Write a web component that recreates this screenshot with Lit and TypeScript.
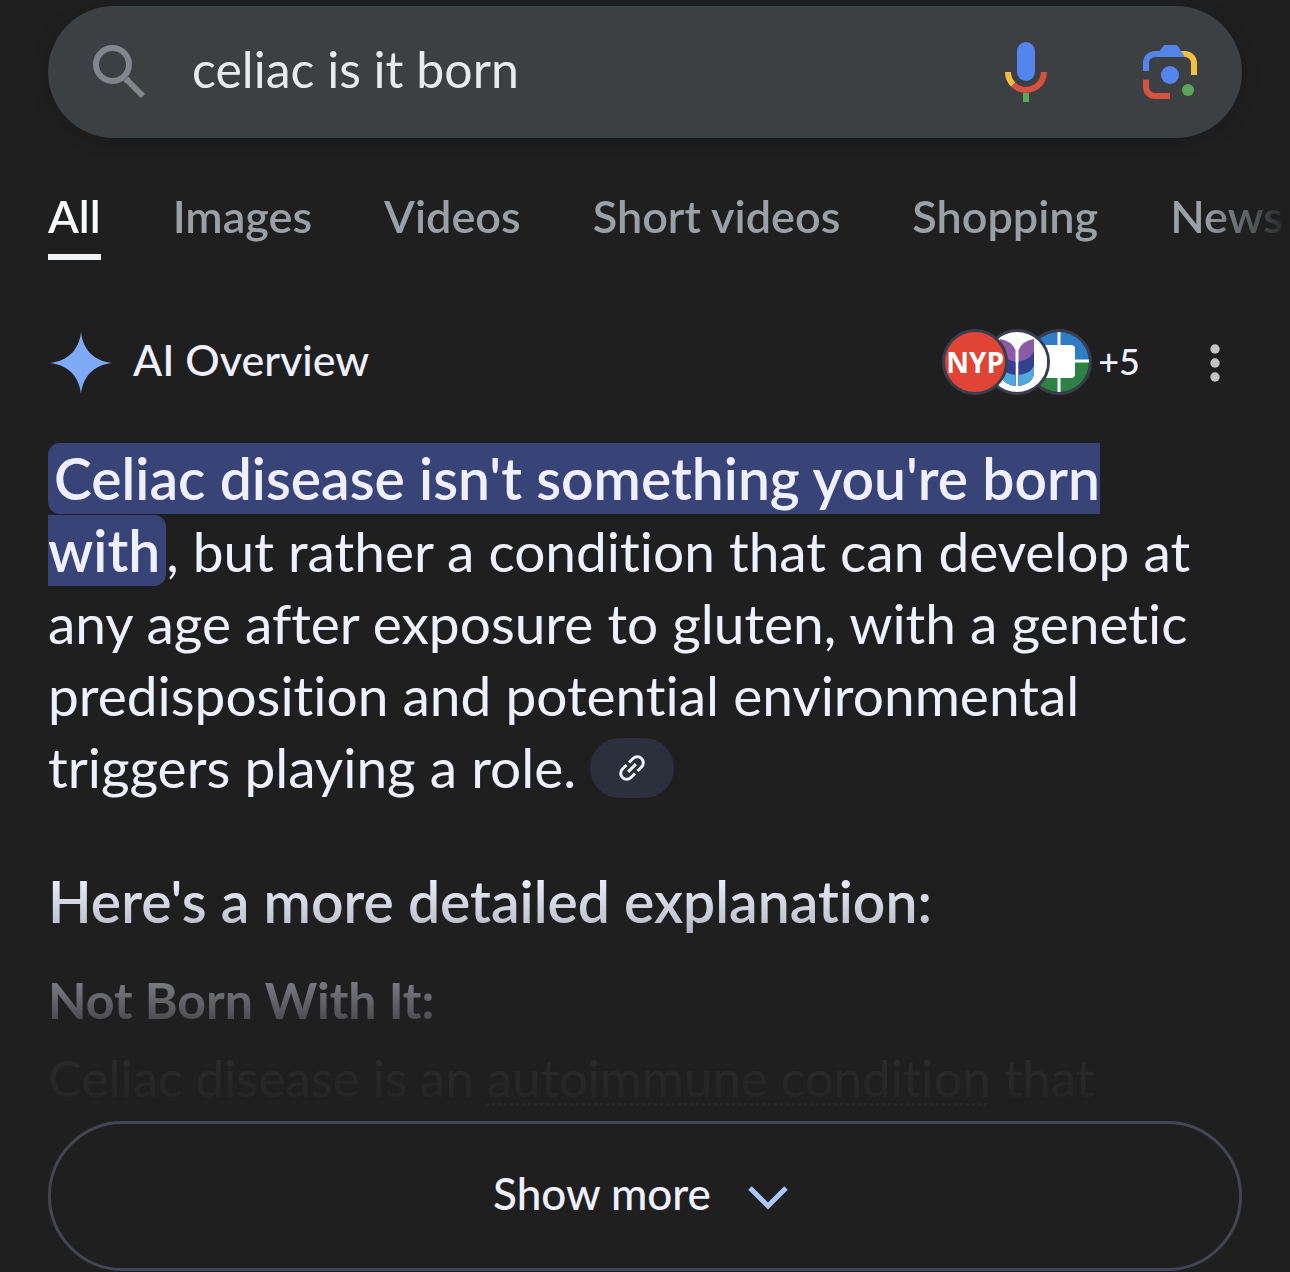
import { LitElement, html, svg, css } from "lit";
import { customElement, property, state } from "lit/decorators.js";

const searchIcon = svg`<svg class="glass" viewBox="0 0 54 54" width="54" height="54" fill="none" stroke="#80868b" stroke-width="6" aria-hidden="true">
  <circle cx="20.5" cy="19.5" r="16.5"/><path d="M34 34 51 51" stroke-width="6"/><path d="M33.500 36.500 36.500 33.500" stroke-width="3" stroke-linecap="round"/></svg>`;

const micIcon = svg`<svg viewBox="0 0 42 60" width="42" height="60" fill="none" stroke-width="6" aria-hidden="true">
  <rect x="12" y="0" width="18" height="39" rx="9" fill="#5385ec"/>
  <path d="M3 30a18 18 0 0 0 5.3 12.7" stroke="#f1bf42"/>
  <path d="M8.3 42.7A18 18 0 0 0 39 30" stroke="#d85140"/>
  <path d="M21 51v9" stroke="#58a55c"/></svg>`;

const lensIcon = svg`<svg viewBox="0 0 54 54" width="54" height="54" fill="none" stroke-width="6" aria-hidden="true">
  <path d="M38 9h4a9 9 0 0 1 9 9v12" stroke="#f1bf42"/>
  <path d="M3 26v-8a9 9 0 0 1 9-9h20" stroke="#5385ec"/>
  <path d="M16 7 20.500 .8Q21 0 22 0h11q1 0 1.500 .8L42 12H16z" fill="#5385ec"/>
  <path d="M3 34.500V42a9 9 0 0 0 9 9h15" stroke="#d85140"/>
  <circle cx="27" cy="30" r="9" fill="#5385ec"/><circle cx="45" cy="45" r="6" fill="#58a55c"/></svg>`;

const sparkIcon = svg`<svg viewBox="0 0 66 66" width="66" height="66" aria-hidden="true">
  <path d="M33 2C35 20 46 31 64 33 46 35 35 46 33 64 31 46 20 35 2 33 20 31 31 20 33 2z" fill="#7faaf8"/></svg>`;

const leafHalf = svg`<path d="M47 7Q35 9 31.500 18V54Q47 51 47 40z" fill="#8d5ba6"/>
  <path d="M47 19Q44 27 31.500 30V54Q47 51 47 40z" fill="#33418f"/>
  <path d="M47 34Q43 42 31.500 43V54Q47 51 47 40z" fill="#4fa9dc"/>`;

const leafIcon = svg`<svg viewBox="0 0 60 60" width="60" height="60" aria-hidden="true">
  <rect width="60" height="60" fill="#fff"/>
  <g>${leafHalf}</g>
  <g transform="matrix(-1 0 0 1 60 0)">
    <path d="M47 7Q35 9 31.500 18V54Q47 51 47 40z" fill="#8d5ba6"/>
    <path d="M47 19Q44 27 31.500 30V54Q47 51 47 40z" fill="#33418f"/>
    <path d="M47 34Q43 42 31.500 43V54Q47 51 47 40z" fill="#4fa9dc"/>
  </g></svg>`;

const crossIcon = svg`<svg viewBox="0 0 60 60" width="60" height="60" aria-hidden="true">
  <rect width="60" height="29" fill="#2f7dc4"/><rect y="29" width="60" height="31" fill="#2d8144"/>
  <path d="M30 0v60M0 29h60" stroke="#fff" stroke-width="3"/><rect x="13" y="13" width="33" height="33" rx="4" fill="#fff"/></svg>`;

const moreIcon = svg`<svg viewBox="0 0 12 40" width="12" height="40" fill="#c4c4c4" aria-hidden="true">
  <circle cx="6" cy="6" r="4.700"/><circle cx="6" cy="20" r="4.700"/><circle cx="6" cy="34" r="4.700"/></svg>`;

const linkIcon = svg`<svg viewBox="0 0 30 30" width="30" height="30" fill="none" stroke="#eef0fa" stroke-width="3" aria-hidden="true">
  <g transform="rotate(-45 15 15)"><path d="M13.200 9H7.500a6 6 0 0 0 0 12h5.700M16.800 9h5.700a6 6 0 0 1 0 12h-5.700M9.500 15h11"/></g></svg>`;

const chevronIcon = svg`<svg viewBox="0 0 42 28" width="42" height="28" fill="none" stroke="#a8c7fa" stroke-width="5" aria-hidden="true">
  <path d="M3 6 21 24 39 6"/></svg>`;

@customElement("search-box")
class SearchBox extends LitElement {
  @property() query = "";

  static styles = css`
    :host { display: block; }
    .bar {
      display: flex; align-items: center; height: 132px; padding: 0 45px 0 44px; box-sizing: border-box;
      border-radius: 66px; background: #3c4043; box-shadow: 0 3px 18px rgba(0, 0, 0, 0.18);
    }
    .glass { flex: none; }
    .field {
      flex: 1; min-width: 0; margin: 0 24px 0 46px; padding: 0 0 6px; height: 72px; box-sizing: border-box;
      border: 0; outline: 0; background: none; appearance: none;
      color: #e8eaed; font: 400 50px/66px Lato, "Open Sans", sans-serif;
    }
    .field::-webkit-search-cancel-button { display: none; }
    .tool { display: flex; padding: 0; border: 0; background: none; cursor: pointer; }
    .mic { margin-right: 96px; }
  `;

  render() {
    return html`<form class="bar" role="search" @submit=${(e: Event) => e.preventDefault()}>
      ${searchIcon}
      <input class="field" type="search" aria-label="Search" .value=${this.query}>
      <button class="tool mic" type="button" aria-label="Search by voice">${micIcon}</button>
      <button class="tool" type="button" aria-label="Search by image">${lensIcon}</button>
    </form>`;
  }
}

@customElement("result-tabs")
class ResultTabs extends LitElement {
  @state() active = "All";
  private tabs = ["All", "Images", "Videos", "Short videos", "Shopping", "News"];

  static styles = css`
    :host { display: block; }
    .tabs {
      display: flex; gap: 72px; padding-left: 48px; overflow: hidden;
      mask-image: linear-gradient(to left, transparent, #000 84px);
    }
    .tab {
      flex: none; padding: 0 0 8px; border-bottom: 6px solid transparent;
      color: #9aa0a6; text-decoration: none; white-space: nowrap;
      font: 600 45px/60px Lato, "Open Sans", sans-serif;
    }
    .current { color: #f8f9fa; border-color: #f1f3f4; }
  `;

  render() {
    return html`<nav class="tabs" aria-label="Result types">
      ${this.tabs.map((t) => html`<a class="tab ${t === this.active ? "current" : ""}" href="#"
        @click=${(e: Event) => { e.preventDefault(); this.active = t; }}>${t}</a>`)}
    </nav>`;
  }
}

@customElement("ai-overview")
class AiOverview extends LitElement {
  static styles = css`
    :host {
      display: block; color: #eef0ff; font-family: Lato, "Open Sans", sans-serif;
      font-variant-ligatures: no-common-ligatures;
    }
    .head { display: flex; align-items: center; height: 66px; }
    .title { margin: 0 auto 0 19px; padding-bottom: 6px; font-size: 43px; line-height: 60px; font-weight: 500; }
    .sources { display: flex; align-items: center; padding: 0 0 2px; border: 0; background: none; color: inherit; cursor: pointer; }
    .badge {
      display: flex; align-items: center; justify-content: center; position: relative;
      width: 60px; height: 60px; border: 3px solid #3a3d4d; border-radius: 50%; overflow: hidden;
    }
    .badge + .badge { margin-left: -24px; }
    .first { z-index: 3; background: #e04434; color: #fff; font: 700 28px/60px "Open Sans", sans-serif; }
    .second { z-index: 2; }
    .extra { margin-left: 6px; padding-bottom: 2px; font: 500 36px/48px Lato, "Open Sans", sans-serif; }
    .menu { display: flex; margin-left: 69px; margin-right: 21px; padding: 0; border: 0; background: none; cursor: pointer; }
    .summary { margin: 47px 0 0; padding-right: 24px; font-size: 55px; line-height: 72px; }
    .mark {
      padding: 1px 6px 2px; border-radius: 12px; background: #384478; color: inherit;
      font-size: 57px; line-height: 0; font-weight: 600;
    }
    .chip {
      display: inline-flex; align-items: center; justify-content: center; vertical-align: 5px;
      width: 84px; height: 60px; padding: 0; border: 0; border-radius: 30px; background: #2c303d; cursor: pointer;
    }
    .faded {
      margin-top: 62px; padding-bottom: 7px;
      mask-image: linear-gradient(#000 12px, rgba(0, 0, 0, 0.8) 54px, rgba(0, 0, 0, 0.46) 114px, rgba(0, 0, 0, 0.24) 152px, rgba(0, 0, 0, 0.06) 194px, rgba(0, 0, 0, 0.03) 240px, transparent);
    }
    .lead { margin: 0; font-size: 57px; line-height: 72px; font-weight: 600; }
    .sub { margin: 27px 0 0; font-size: 50px; line-height: 72px; font-weight: 700; }
    .body { margin: 6px 0 0; font-size: 51px; line-height: 72px; }
    .term { color: inherit; text-decoration: underline dotted 3px; text-underline-offset: 6px; }
    .show {
      display: flex; align-items: center; justify-content: center; gap: 36px; width: 100%; height: 150px;
      padding: 0 8px 0 0; border: 3px solid #444653; border-radius: 75px; background: none; color: inherit; cursor: pointer;
      font: 500 44px/60px Lato, "Open Sans", sans-serif;
    }
    .caption { padding-bottom: 6px; }
  `;

  render() {
    return html`<section aria-label="AI Overview">
      <header class="head">
        ${sparkIcon}
        <h1 class="title">AI Overview</h1>
        <button class="sources" type="button">
          <span class="badge first">NYP</span>
          <span class="badge second">${leafIcon}</span>
          <span class="badge">${crossIcon}</span>
          <span class="extra">+5</span>
        </button>
        <button class="menu" type="button" aria-label="More options">${moreIcon}</button>
      </header>
      <p class="summary"><mark class="mark">Celiac disease isn't something you're born with</mark>, but rather a condition that can develop at any age after exposure to gluten, with a genetic predisposition and potential environmental triggers playing a role. <button class="chip" type="button" aria-label="View related links">${linkIcon}</button></p>
      <div class="faded">
        <h2 class="lead">Here's a more detailed explanation:</h2>
        <h3 class="sub">Not Born With It:</h3>
        <p class="body">Celiac disease is an <a class="term" href="#">autoimmune condition</a> that</p>
      </div>
      <button class="show" type="button"><span class="caption">Show more</span> ${chevronIcon}</button>
    </section>`;
  }
}

@customElement("app-root")
class AppRoot extends LitElement {
  static styles = css`
    :host { display: block; min-height: 100vh; box-sizing: border-box; background: #1f1f1f; padding: 6px 0 1px; }
    .search { margin: 0 48px; }
    .types { margin-top: 48px; }
    .overview { margin: 70px 48px 0; }
  `;

  render() {
    return html`<search-box class="search" query="celiac is it born"></search-box>
      <result-tabs class="types"></result-tabs>
      <ai-overview class="overview"></ai-overview>`;
  }
}
